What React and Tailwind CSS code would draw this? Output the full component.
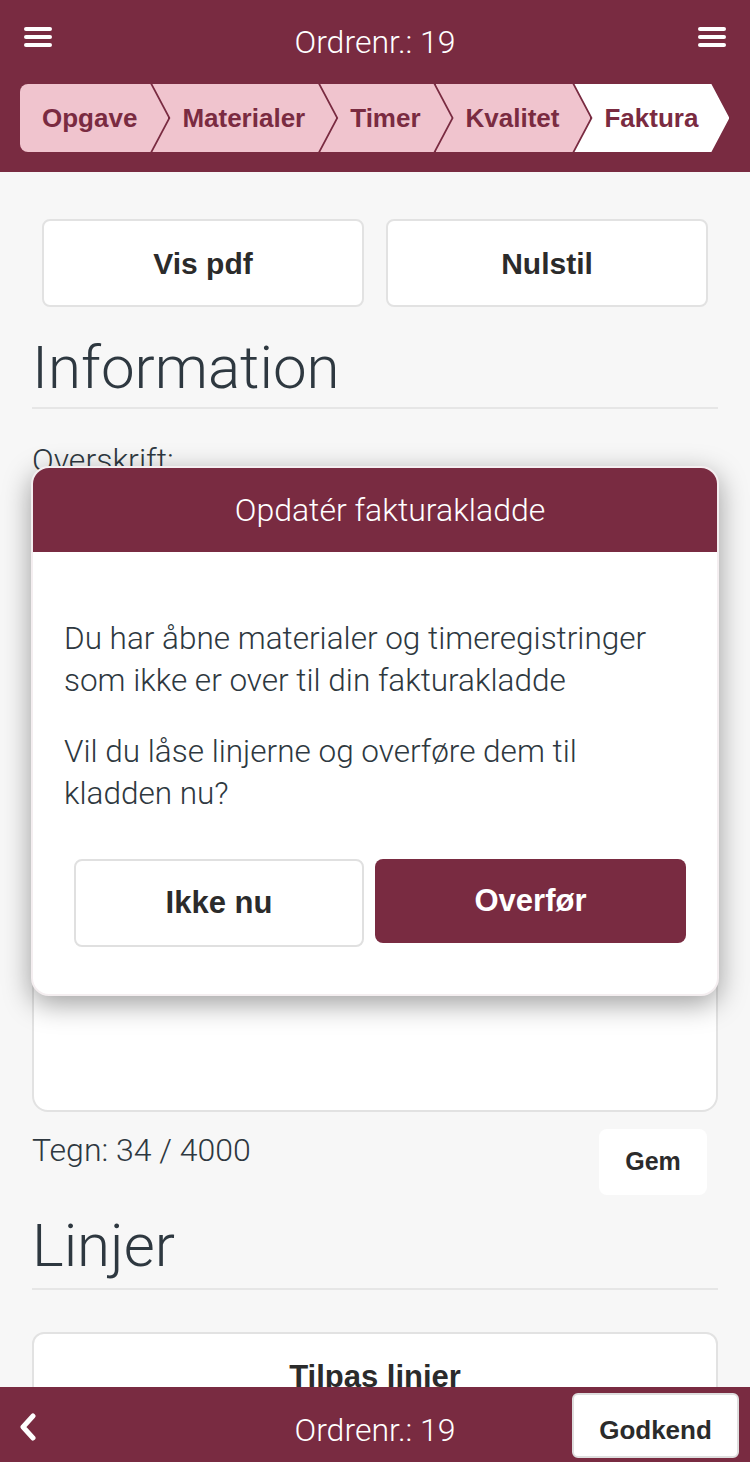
import React from "react";

const BOLD = "font-['Liberation_Sans',Arial,sans-serif] font-bold";

function Burger() {
  return (
    <svg width="28" height="22" viewBox="0 0 28 22" className="block">
      <rect x="0" y="1" width="28" height="4" rx="2" fill="white" />
      <rect x="0" y="9" width="28" height="4" rx="2" fill="white" />
      <rect x="0" y="17" width="28" height="4" rx="2" fill="white" />
    </svg>
  );
}

function Crumb({ label, first, active }) {
  const clip = first
    ? "[clip-path:polygon(0_0,calc(100%_-_18px)_0,100%_50%,calc(100%_-_18px)_100%,0_100%)] rounded-l-[8px] pl-[22px]"
    : "[clip-path:polygon(0_0,calc(100%_-_18px)_0,100%_50%,calc(100%_-_18px)_100%,0_100%,18px_50%)] ml-[-16px] pl-[30px]";
  return (
    <div
      className={`${clip} ${active ? "bg-white" : "bg-[#f0c4ce]"} ${BOLD} h-[68px] flex items-center pr-[31px] text-[26px] text-[#7a2b41] whitespace-nowrap`}
    >
      {label}
    </div>
  );
}

export default function App() {
  return (
    <div className="w-[750px] h-[1462px] flex flex-col bg-[#f7f7f7] overflow-hidden relative font-[Roboto,sans-serif] font-light text-[#2e3840]">
      {/* Header */}
      <header className="bg-[#792b41] h-[172px] shrink-0 flex flex-col">
        <div className="h-[84px] grid grid-cols-[1fr_auto_1fr] items-start px-[24px] pt-[26px]">
          <Burger />
          <div className="text-white text-[32px] leading-[40px] -mt-[4px]">Ordrenr.: 19</div>
          <div className="justify-self-end">
            <Burger />
          </div>
        </div>
        <div className="flex pl-[20px]">
          <Crumb label="Opgave" first />
          <Crumb label="Materialer" />
          <Crumb label="Timer" />
          <Crumb label="Kvalitet" />
          <Crumb label="Faktura" active />
        </div>
      </header>

      {/* Main */}
      <main className="flex-1 overflow-hidden px-[32px]">
        <div className="flex gap-[22px] px-[10px] pt-[47px]">
          <button className={`flex-1 h-[88px] bg-white border-2 border-[#e2e2e2] rounded-[8px] text-[30px] text-[#2b2b2b] ${BOLD}`}>
            Vis pdf
          </button>
          <button className={`flex-1 h-[88px] bg-white border-2 border-[#e2e2e2] rounded-[8px] text-[30px] text-[#2b2b2b] ${BOLD}`}>
            Nulstil
          </button>
        </div>

        <h1 className="mt-[25px] text-[60px] leading-[72px] pb-[3px] border-b-2 border-[#e6e6e6]">Information</h1>

        <div className="mt-[33px] text-[32px] leading-[36px]">Overskrift:</div>
        <div className="mt-[10px] h-[70px] bg-white border-2 border-[#e2e2e2] rounded-[12px]"></div>
        <div className="mt-[30px] text-[32px] leading-[36px]">Beskrivelse:</div>
        <div className="mt-[10px] h-[478px] bg-white border-2 border-[#e2e2e2] rounded-[16px]"></div>

        <div className="flex items-start justify-between mt-[17px]">
          <div className="text-[32px] leading-[40px] mt-[1px]">Tegn: 34 / 4000</div>
          <button className={`w-[108px] h-[66px] bg-white rounded-[8px] mr-[11px] text-[25px] text-[#2b2b2b] ${BOLD}`}>
            Gem
          </button>
        </div>

        <h1 className="mt-[15px] text-[60px] leading-[72px] pb-[6px] border-b-2 border-[#e6e6e6]">Linjer</h1>

        <div className="mt-[42px] h-[120px] bg-white border-2 border-[#e2e2e2] rounded-[12px] flex justify-center pt-[20px]">
          <span className={`text-[31px] text-[#2b2b2b] ${BOLD}`}>Tilpas linier</span>
        </div>
      </main>

      {/* Footer */}
      <footer className="bg-[#792b41] h-[75px] shrink-0 grid grid-cols-[1fr_auto_1fr] items-center pl-[18px] pr-[11px]">
        <svg width="20" height="28" viewBox="0 0 20 28" className="block mt-[4px]">
          <path d="M15 3 L5 14 L15 25" stroke="white" strokeWidth="5" fill="none" strokeLinecap="round" strokeLinejoin="round" />
        </svg>
        <div className="text-white text-[32px] leading-[40px] mt-[10px] -ml-[7px]">Ordrenr.: 19</div>
        <div className="justify-self-end self-start pt-[6px]">
          <button className={`w-[167px] h-[65px] bg-white border-2 border-[#dedede] rounded-[6px] pt-[10px] text-[26px] text-[#2b2b2b] ${BOLD}`}>
            Godkend
          </button>
        </div>
      </footer>

      {/* Modal */}
      <div className="absolute left-[31px] top-[466px] w-[688px] h-[530px] bg-white rounded-[18px] border-2 border-[#f4eef0] shadow-[0_8px_28px_rgba(0,0,0,0.38)] overflow-hidden flex flex-col">
        <div className="h-[84px] bg-[#792b41] flex items-center justify-center text-white text-[32px] pl-[30px]">
          Opdatér fakturakladde
        </div>
        <div className="pt-[66px] px-[31px] text-[31.5px] leading-[42px]">
          <p>Du har åbne materialer og timeregistringer som ikke er over til din fakturakladde</p>
          <p className="mt-[29px]">Vil du låse linjerne og overføre dem til kladden nu?</p>
        </div>
        <div className="flex items-start gap-[11px] pl-[41px] pr-[31px] mt-[44px]">
          <button className={`w-[290px] h-[88px] bg-white border-2 border-[#e0e0e0] rounded-[8px] text-[31px] text-[#2b2b2b] ${BOLD}`}>
            Ikke nu
          </button>
          <button className={`flex-1 h-[84px] bg-[#792b41] rounded-[8px] text-[31px] text-white ${BOLD}`}>
            Overfør
          </button>
        </div>
      </div>
    </div>
  );
}
